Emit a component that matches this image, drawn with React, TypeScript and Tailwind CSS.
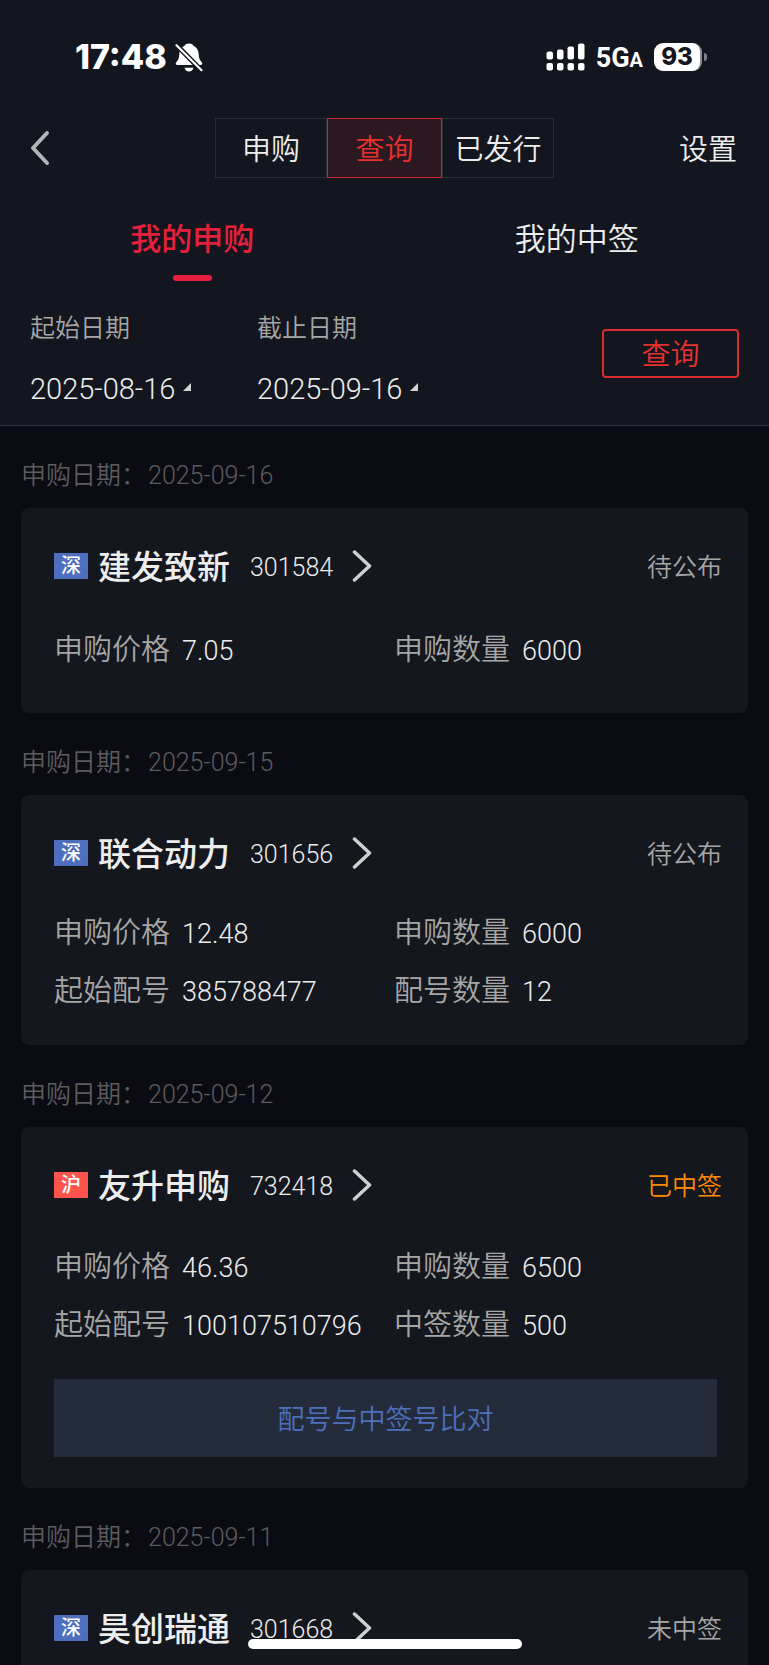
import { useState } from "react";

type Market = "sz" | "sh";

type Subscription = {
  date: string;
  market: Market;
  name: string;
  code: string;
  status: string;
  won?: boolean;
  rows: [string, string][];
  spacing: string;
  action?: string;
};

const segments = ["申购", "查询", "已发行"];
const tabs = ["我的申购", "我的中签"];

const subscriptions: Subscription[] = [
  {
    date: "2025-09-16",
    market: "sz",
    name: "建发致新",
    code: "301584",
    status: "待公布",
    rows: [
      ["申购价格", "7.05"],
      ["申购数量", "6000"],
    ],
    spacing: "pt-[18px] pb-[33px]",
  },
  {
    date: "2025-09-15",
    market: "sz",
    name: "联合动力",
    code: "301656",
    status: "待公布",
    rows: [
      ["申购价格", "12.48"],
      ["申购数量", "6000"],
      ["起始配号", "385788477"],
      ["配号数量", "12"],
    ],
    spacing: "pt-[14px] pb-[25px]",
  },
  {
    date: "2025-09-12",
    market: "sh",
    name: "友升申购",
    code: "732418",
    status: "已中签",
    won: true,
    rows: [
      ["申购价格", "46.36"],
      ["申购数量", "6500"],
      ["起始配号", "100107510796"],
      ["中签数量", "500"],
    ],
    spacing: "pt-4 pb-[25px]",
    action: "配号与中签号比对",
  },
  {
    date: "2025-09-11",
    market: "sz",
    name: "昊创瑞通",
    code: "301668",
    status: "未中签",
    rows: [],
    spacing: "pt-[18px] pb-[33px]",
  },
];

export default function App() {
  const [segment, setSegment] = useState("查询");
  const [tab, setTab] = useState("我的申购");

  return (
    <div className="flex h-screen flex-col overflow-hidden bg-[#0b0b14] font-[Roboto,'Noto_Sans_CJK_SC',sans-serif] font-[350] text-[#ededed]">
      <header className="shrink-0 border-b border-[#2b3040] bg-[#13161e]">
        <StatusBar />

        <nav className="mt-1 grid h-[60px] grid-cols-[1fr_auto_1fr] items-center text-[29px] leading-none">
          <button type="button" aria-label="返回" className="justify-self-start pl-[30px] text-[#b4b4b4]">
            <BackIcon />
          </button>
          <div className="flex h-[60px]">
            {segments.map((item) => (
              <button
                key={item}
                type="button"
                aria-pressed={segment === item}
                onClick={() => setSegment(item)}
                className={
                  segment === item
                    ? "w-[115px] border border-[#c9292f] bg-[#2b1820] pt-1 text-[#e8302f]"
                    : "w-[112px] border border-[#282b38] pt-1"
                }
              >
                {item}
              </button>
            ))}
          </div>
          <a href="#settings" className="justify-self-end pt-1 pr-8">
            设置
          </a>
        </nav>

        <div role="tablist" className="grid h-[112px] grid-cols-2">
          {tabs.map((item) => (
            <button
              key={item}
              type="button"
              role="tab"
              aria-selected={tab === item}
              onClick={() => setTab(item)}
              className={
                tab === item
                  ? "flex flex-col items-center pt-11 text-[31px] leading-9 font-medium text-[#e5203d]"
                  : "flex flex-col items-center pt-11 text-[31px] leading-9"
              }
            >
              {item}
              {tab === item ? <span className="mt-[17px] h-1.5 w-[39px] rounded-full bg-[#e5203d]" /> : null}
            </button>
          ))}
        </div>

        <form className="flex h-[135px] items-start px-[30px]" onSubmit={(event) => event.preventDefault()}>
          <DateField id="start-date" label="起始日期" value="2025-08-16" />
          <DateField id="end-date" label="截止日期" value="2025-09-16" />
          <button
            type="submit"
            className="mt-[39px] ml-auto h-[49px] w-[137px] rounded-sm border-2 border-[#d92c2f] pt-1 text-[29px] leading-none text-[#e8302f]"
          >
            查询
          </button>
        </form>
      </header>

      <main className="min-h-0 flex-1 overflow-y-auto px-[21px] [scrollbar-width:none]">
        {subscriptions.map((item) => (
          <SubscriptionCard key={item.code} item={item} />
        ))}
      </main>

      <div className="fixed bottom-4 left-1/2 h-2.5 w-[274px] -translate-x-1/2 rounded-full bg-white" />
    </div>
  );
}

function StatusBar() {
  return (
    <div className="flex h-[114px] items-center justify-between pr-[62px] pl-[75px] font-[Inter,sans-serif] text-white">
      <div className="flex items-center gap-2">
        <span className="text-[34px] leading-10 font-extrabold">17:48</span>
        <BellOffIcon />
      </div>
      <div className="flex items-center gap-[11px]">
        <SignalIcon />
        <span className="pt-1 font-[Roboto,sans-serif] text-[27px] leading-8 font-bold">
          5G<span className="text-[20px]">A</span>
        </span>
        <div className="flex items-center gap-0.5">
          <span className="flex h-7 w-12 items-center justify-center rounded-[9px] border-r-2 border-[#8a8c90] bg-white text-[24px] leading-none font-extrabold text-[#13161e]">
            93
          </span>
          <span className="h-2 w-[3px] rounded-r-full bg-[#7d7f85]" />
        </div>
      </div>
    </div>
  );
}

function DateField({ id, label, value }: { id: string; label: string; value: string }) {
  return (
    <div className="flex w-[227px] flex-col items-start">
      <label htmlFor={id} className="mt-[23px] text-[25px] leading-8 text-[#a6a6a6]">
        {label}
      </label>
      <button id={id} type="button" className="mt-7 flex items-center gap-2 text-[29px] leading-8">
        {value}
        <svg className="mb-1 h-2 w-2" viewBox="0 0 8 8" fill="#d4d4d4" aria-hidden>
          <path d="M8 0v8H0z" />
        </svg>
      </button>
    </div>
  );
}

function SubscriptionCard({ item }: { item: Subscription }) {
  return (
    <section>
      <h2 className="flex h-[82px] items-end gap-0.5 pb-4 text-[25px] leading-8 text-[#5c5c5c]">
        <span>申购日期：</span>
        <span>{item.date}</span>
      </h2>
      <article className="min-h-[205px] rounded-lg bg-[#14171e] pt-[25px] pl-[33px]">
        <div className="flex h-[70px] items-center pr-[26px]">
          <span
            className={
              item.market === "sz"
                ? "mb-1 flex h-[26px] w-[34px] items-center justify-center bg-[#4e6fbd] text-[20px] leading-none font-medium text-white"
                : "mb-1 flex h-[26px] w-[34px] items-center justify-center bg-[#ff544c] text-[20px] leading-none font-medium text-white"
            }
          >
            {item.market === "sz" ? "深" : "沪"}
          </span>
          <a href={`#${item.code}`} className="ml-2.5 flex items-center">
            <span className="text-[33px] leading-10 font-medium">{item.name}</span>
            <span className="ml-5 text-[25px] leading-10">{item.code}</span>
            <ChevronIcon />
          </a>
          <span className={item.won ? "ml-auto text-[25px] text-[#ff8a00]" : "ml-auto text-[25px] text-[#a6a6a6]"}>
            {item.status}
          </span>
        </div>

        <dl className={`grid grid-cols-[340px_1fr] ${item.spacing}`}>
          {item.rows.map(([label, value]) => (
            <div key={label} className="flex h-[58px] items-baseline gap-3 leading-[58px]">
              <dt className="text-[29px] text-[#a6a6a6]">{label}</dt>
              <dd className="text-[27px]">{value}</dd>
            </div>
          ))}
        </dl>

        {item.action ? (
          <div className="pr-[31px] pb-[31px]">
            <button type="button" className="h-[78px] w-full bg-[#242c3c] pt-1 text-[27px] text-[#4e6fbd]">
              {item.action}
            </button>
          </div>
        ) : null}
      </article>
    </section>
  );
}

function BackIcon() {
  return (
    <svg
      className="h-9 w-5"
      viewBox="0 0 20 36"
      fill="none"
      stroke="currentColor"
      strokeWidth="4"
      strokeLinecap="round"
      strokeLinejoin="round"
      aria-hidden
    >
      <path d="M17 3 3 18l14 15" />
    </svg>
  );
}

function ChevronIcon() {
  return (
    <svg
      className="mb-1 ml-[19px] h-8 w-5"
      viewBox="0 0 20 32"
      fill="none"
      stroke="#cfcfcf"
      strokeWidth="3.500"
      strokeLinecap="round"
      strokeLinejoin="round"
      aria-hidden
    >
      <path d="m2.500 2 15 14-15 14" />
    </svg>
  );
}

function BellOffIcon() {
  return (
    <svg className="h-[29px] w-7" viewBox="0 0 28 29" fill="none" aria-hidden>
      <path
        d="M14 0.5c2.800 0 4 1.200 4.500 2.300 3.500 1.500 5 4.700 5.200 8.400 0.200 4.300 1.300 6 3.100 8.100 1 1.200 0.400 2.700-1.200 2.700H2.400c-1.600 0-2.200-1.500-1.200-2.700 1.800-2.100 2.900-3.800 3.100-8.100 0.200-3.700 1.700-6.900 5.200-8.400C10 1.700 11.200 0.500 14 0.500z"
        fill="white"
      />
      <path d="M9.500 24.800h9c-0.500 2.300-2.300 3.700-4.500 3.700s-4-1.400-4.500-3.700z" fill="white" />
      <path d="m0.500 1 27 27.500" stroke="#13161e" strokeWidth="5" />
      <path d="m1.500 2.200 25 25" stroke="white" strokeWidth="2.200" strokeLinecap="round" />
    </svg>
  );
}

function SignalIcon() {
  return (
    <svg className="h-7 w-[39px]" viewBox="0 0 39 28" fill="white" aria-hidden>
      <rect x="0.500" y="8.500" width="6.500" height="8" rx="2" />
      <rect x="11" y="6.500" width="6.500" height="10" rx="2" />
      <rect x="21.500" y="3.500" width="6.500" height="13" rx="2" />
      <rect x="32" y="0.500" width="6.500" height="16" rx="2" />
      <rect x="0.500" y="20" width="6.500" height="7.500" rx="2" />
      <rect x="11" y="20" width="6.500" height="7.500" rx="2" />
      <rect x="21.500" y="20" width="6.500" height="7.500" rx="2" />
      <rect x="32" y="20" width="6.500" height="7.500" rx="2" />
    </svg>
  );
}
